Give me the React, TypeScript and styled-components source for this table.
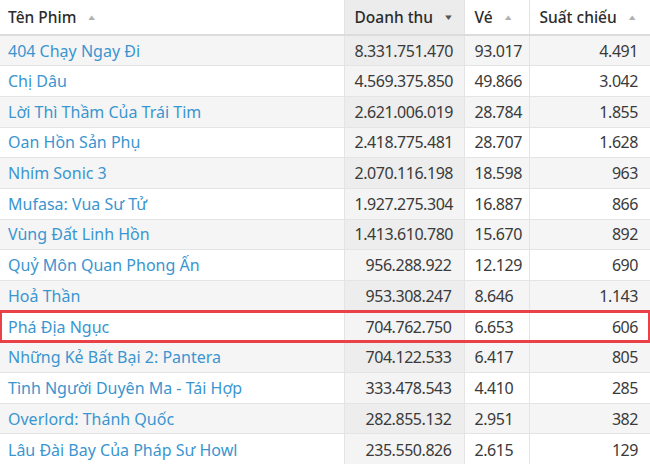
import React from "react";
import styled, { createGlobalStyle } from "styled-components";

const Global = createGlobalStyle`
  html, body { margin: 0; padding: 0; background: #fff; }
  body { font-family: "Noto Sans", "Open Sans", sans-serif; }
`;

const Table = styled.table`
  width: 650px;
  table-layout: fixed;
  border-collapse: collapse;
  font-size: 16px;
`;

const Th = styled.th<{ $sorted?: boolean }>`
  box-sizing: border-box;
  height: 35px;
  padding: 0 10px;
  text-align: left;
  font-weight: 500;
  font-size: 15.5px;
  color: #2b2b2b;
  background: ${(p) => (p.$sorted ? "#ececec" : "#fff")};
  border-bottom: 2px solid #dcdcdc;
  border-left: 1px solid #e3e3e3;
  white-space: nowrap;
  &:first-child { border-left: none; padding-left: 8px; }
`;

const Arrow = styled.span<{ $dark?: boolean }>`
  display: inline-block;
  margin-left: 10px;
  font-size: 11px;
  vertical-align: 2px;
  transform: scaleY(0.7);
  color: ${(p) => (p.$dark ? "#555" : "#b0b0b0")};
`;

const Tr = styled.tr<{ $odd: boolean; $hl?: boolean }>`
  background: ${(p) => (p.$odd ? "#f5f5f5" : "#fff")};
  outline: ${(p) => (p.$hl ? "3px solid #ea4148" : "none")};
  outline-offset: -2px;
`;

const Td = styled.td<{ $sorted?: boolean; $odd?: boolean; $num?: boolean; $right?: boolean }>`
  box-sizing: border-box;
  height: 30.7px;
  padding: 0 12px 0 10px;
  border-top: 1px solid #e4e4e4;
  border-left: 1px solid #e4e4e4;
  text-align: ${(p) => (p.$right ? "right" : "left")};
  font-size: 16px;
  letter-spacing: ${(p) => (p.$num ? "-0.45px" : "0")};
  color: #3a3a3a;
  white-space: nowrap;
  background: ${(p) => (p.$sorted ? (p.$odd ? "#ededed" : "#f4f4f4") : "transparent")};
  &:first-child { border-left: none; padding-left: 8px; }
`;

const Link = styled.span`
  color: #3a95d0;
`;

const rows: [string, string, string, string][] = [
  ["404 Chạy Ngay Đi", "8.331.751.470", "93.017", "4.491"],
  ["Chị Dâu", "4.569.375.850", "49.866", "3.042"],
  ["Lời Thì Thầm Của Trái Tim", "2.621.006.019", "28.784", "1.855"],
  ["Oan Hồn Sản Phụ", "2.418.775.481", "28.707", "1.628"],
  ["Nhím Sonic 3", "2.070.116.198", "18.598", "963"],
  ["Mufasa: Vua Sư Tử", "1.927.275.304", "16.887", "866"],
  ["Vùng Đất Linh Hồn", "1.413.610.780", "15.670", "892"],
  ["Quỷ Môn Quan Phong Ấn", "956.288.922", "12.129", "690"],
  ["Hoả Thần", "953.308.247", "8.646", "1.143"],
  ["Phá Địa Ngục", "704.762.750", "6.653", "606"],
  ["Những Kẻ Bất Bại 2: Pantera", "704.122.533", "6.417", "805"],
  ["Tình Người Duyên Ma - Tái Hợp", "333.478.543", "4.410", "285"],
  ["Overlord: Thánh Quốc", "282.855.132", "2.951", "382"],
  ["Lâu Đài Bay Của Pháp Sư Howl", "235.550.826", "2.615", "129"],
];

export default function App() {
  return (
    <>
      <Global />
      <Table>
        <colgroup>
          <col style={{ width: 344 }} />
          <col style={{ width: 120 }} />
          <col style={{ width: 65 }} />
          <col style={{ width: 121 }} />
        </colgroup>
        <thead>
          <tr>
            <Th>Tên Phim<Arrow>▲</Arrow></Th>
            <Th $sorted>Doanh thu<Arrow $dark>▼</Arrow></Th>
            <Th>Vé<Arrow>▲</Arrow></Th>
            <Th>Suất chiếu<Arrow>▲</Arrow></Th>
          </tr>
        </thead>
        <tbody>
          {rows.map((r, i) => {
            const odd = i % 2 === 0;
            return (
              <Tr key={r[0]} $odd={odd} $hl={i === 9}>
                <Td><Link>{r[0]}</Link></Td>
                <Td $num $right $sorted $odd={odd}>{r[1]}</Td>
                <Td $num>{r[2]}</Td>
                <Td $num $right>{r[3]}</Td>
              </Tr>
            );
          })}
        </tbody>
      </Table>
    </>
  );
}
